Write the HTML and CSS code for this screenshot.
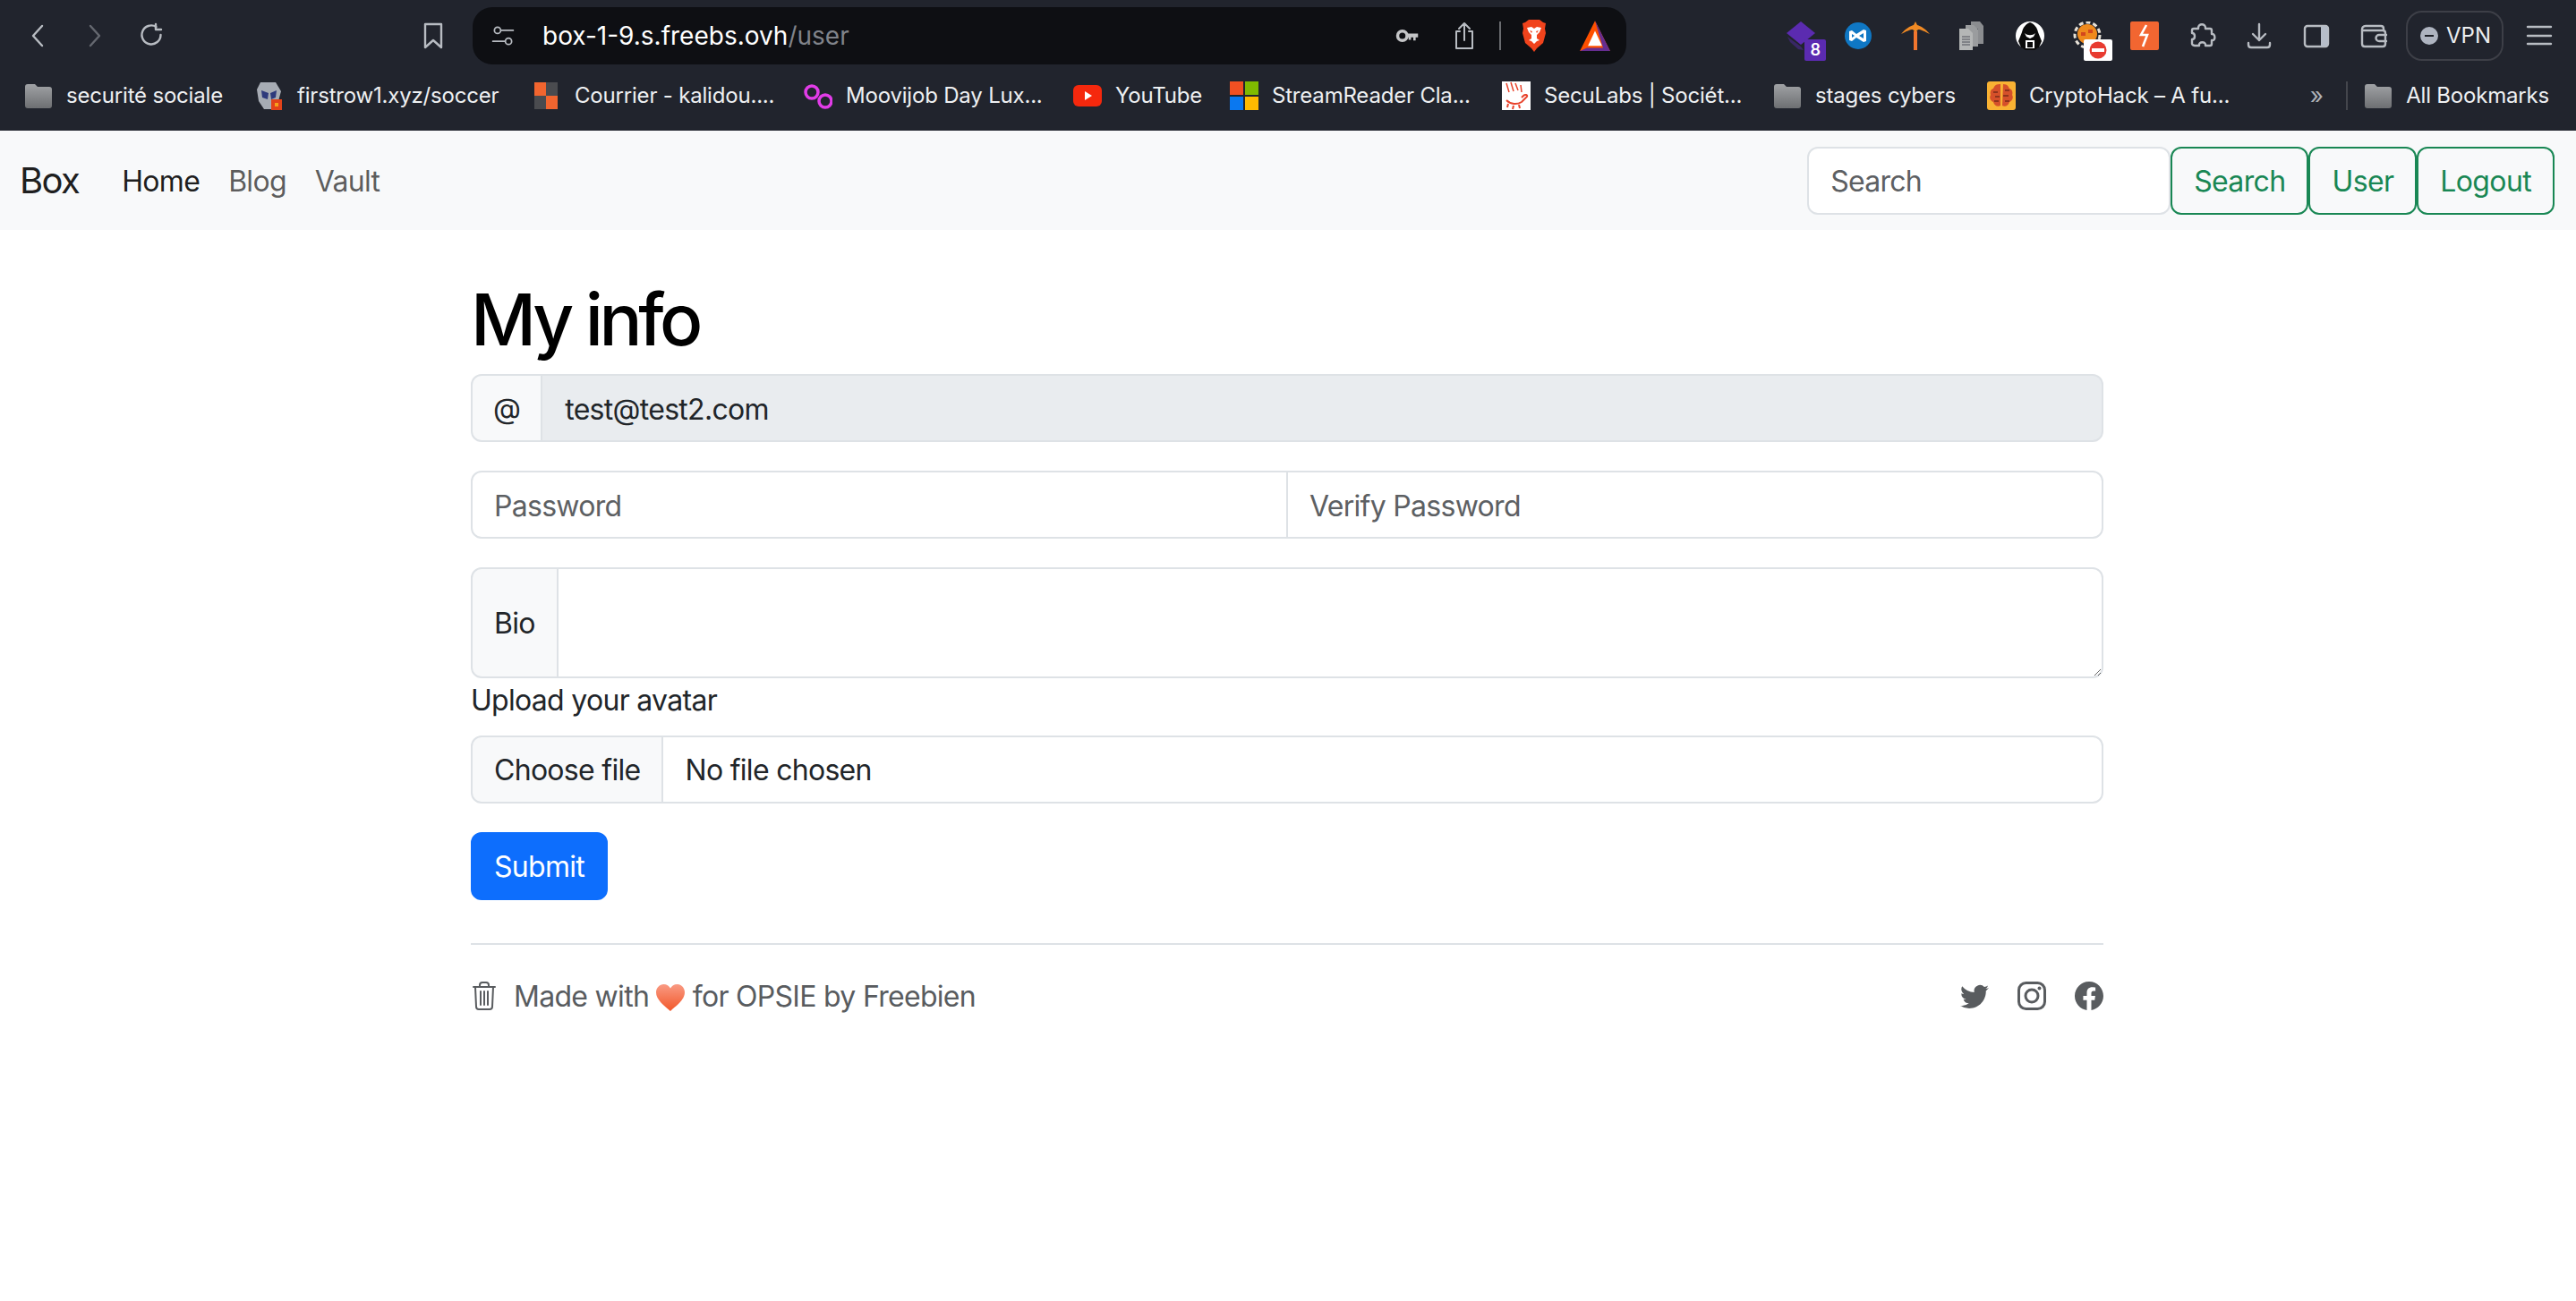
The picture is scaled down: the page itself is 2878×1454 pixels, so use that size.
FILE: index.html
```html
<!DOCTYPE html>
<html lang="en">
<head>
<meta charset="utf-8">
<title>My info</title>
<link rel="stylesheet" href="styles.css">
</head>
<body>
<header class="chrome">
  <div class="toolbar">
    <div class="tool-group">
      <svg class="ico" viewBox="0 0 32 32"><path class="st" d="M21 5 11 16l10 11"/></svg>
      <svg class="ico dim" viewBox="0 0 32 32"><path class="st" d="m11 5 10 11-10 11"/></svg>
      <svg class="ico" viewBox="0 0 32 32"><path class="st" d="M25.5 15a10.5 10.5 0 1 1-5-9M20 3v6h6"/></svg>
    </div>
    <svg class="ico bookmark-ico" viewBox="0 0 32 32"><path class="st" d="M7 3h18v26l-9-8-9 8z"/></svg>
    <div class="addressbar">
      <svg class="ico tune" viewBox="0 0 32 32"><circle class="st thin" cx="9" cy="9" r="4"/><path class="st thin" d="M14 9h15M3 23h15"/><circle class="st thin" cx="23" cy="23" r="4"/></svg>
      <span class="url">box-1-9.s.freebs.ovh<span class="url-path">/user</span></span>
      <div class="addr-actions">
        <svg class="ico key" viewBox="0 0 32 32"><circle class="key-ring" cx="10" cy="16" r="6"/><path class="key-fill" d="M15 13h15v5h-3v4h-3v-4h-3v3h-3v-3h-3z"/></svg>
        <svg class="ico share" viewBox="0 0 32 32"><path class="st thin" d="M16 21V2m-6 6 6-6 6 6M11 11H7v19h18V11h-4"/></svg>
        <span class="addr-sep"></span>
        <svg class="ico brave" viewBox="0 0 32 36"><path fill="#f1431c" d="M6 3 10 0h12l4 3 3 1-1 6 1 5-3 11-7 6-3 4-3-4-7-6-3-11 1-5-1-6z"/><path fill="#fff" d="M8 9l5-1 3 2 3-2 5 1-2 5-3 3v4l3 2-3 1-3 3-3-3-3-1 3-2v-4l-3-3z"/><path fill="#f1431c" d="M11 12l3 1-1 2zM21 12l-3 1 1 2z"/></svg>
        <svg class="ico bat" viewBox="0 0 32 32"><path fill="#ff5000" d="M16 1 1 31h30z"/><path fill="#662d91" d="M16 1l15 30H1l7-3h16z"/><path fill="#fff" d="M16 11l7 15H9z"/></svg>
      </div>
    </div>
    <div class="tool-right">
      <div class="ext">
        <svg class="ico" viewBox="0 0 32 32"><path fill="#5b2bb0" d="M16 0 32 13 16 26 0 13z"/><path fill="#4a2a8c" opacity=".6" d="M1 17l15 11 3 4-6-1-9-8z"/></svg>
        <span class="badge badge-purple">8</span>
      </div>
      <svg class="ico" viewBox="0 0 32 32"><circle cx="16" cy="16" r="15" fill="#0f77c4"/><path fill="#fff" d="M6 11l3-1 5 4 8-5 3 1v12l-3 1-8-5-5 4-3-1zm3 3v4l3-2zm13-1-5 3 5 3z"/></svg>
      <svg class="ico" viewBox="0 0 32 32"><path fill="#f08a24" d="M0 14C5 8 10 5 14 4l2-4 2 4c4 1 9 4 14 10-6-3-10-5-13-5l-3 3-3-3c-3 0-7 2-13 5z"/><rect fill="#f2762e" x="14" y="11" width="4" height="21"/></svg>
      <svg class="ico" viewBox="0 0 32 32"><path fill="#8b8d90" d="M14 0h10l4 5v20h-6V8h-8z"/><path fill="#9a9c9e" d="M8 4h9l5 5v19H8z"/><path fill="#b4b6b6" d="M1 8h10l5 5v19H1z"/><path stroke="#70737a" stroke-width="1.3" d="M4 17h9M4 20h9M4 23h9M4 26h9"/></svg>
      <svg class="ico" viewBox="0 0 32 32"><circle cx="16" cy="16" r="16" fill="#fff"/><path fill="#0b0b0b" d="M16 1C11 3 8 7 7 12L3 22l3 7 5 3h10l5-3 3-7-4-10C24 7 21 3 16 1z"/><path fill="#fff" d="M10 13c3 3 9 3 12 0l-2 4-4 2-4-2zM11 21h10v9H11z"/><path fill="#0b0b0b" d="M13 23h6v6h-6z"/></svg>
      <div class="ext">
        <svg class="ico" viewBox="0 0 32 32"><circle cx="16" cy="15" r="14" fill="none" stroke="#e8e2d8" stroke-width="3" stroke-dasharray="5 3"/><circle cx="16" cy="14" r="11" fill="#ef8a1d"/><path fill="#d4471d" d="M9 12h5v4H9zM17 9h5v4h-5z"/></svg>
        <span class="badge badge-stop"><svg class="stop" viewBox="0 0 20 20"><circle cx="10" cy="10" r="9.5" fill="#e83b30"/><rect x="3" y="8" width="14" height="4" fill="#fff"/></svg></span>
      </div>
      <svg class="ico" viewBox="0 0 32 32"><rect width="32" height="32" rx="2" fill="#f26631"/><path fill="none" stroke="#fff" stroke-width="2.600" d="M18 4 12 15h7l-5 13"/></svg>
      <svg class="ico" viewBox="0 0 32 32"><path class="st" d="M12 7c0-5 8-5 8 0v1h5c1 0 2 1 2 2v4c4-1 5 8 0 7v4c0 1-1 2-2 2h-5c1-5-8-5-7 0H8c-1 0-3-1-3-2v-5c4 0 4-7 0-7v-3c0-1 1-2 2-2h5z"/></svg>
      <svg class="ico" viewBox="0 0 32 32"><path class="st" d="M16 3v18m-7-7 7 7 7-7M4 24v2c0 2 1 3 3 3h18c2 0 3-1 3-3v-2"/></svg>
      <svg class="ico" viewBox="0 0 32 32"><rect class="st" x="3" y="5" width="26" height="23" rx="3"/><path fill="#b6bdc9" d="M21 5h5c2 0 3 1 3 3v17c0 2-1 3-3 3h-5z"/></svg>
      <svg class="ico" viewBox="0 0 32 32"><path class="st" d="M3 9c0-2 1-4 4-4h17c2 0 3 1 3 3v2M3 9v16c0 2 1 3 3 3h20c2 0 3-1 3-3V13c0-2-1-3-3-3H6c-2 0-3 0-3-1z"/><path class="st" d="M30 15h-8a3.500 3.500 0 0 0 0 7h8"/></svg>
      <div class="vpn">
        <svg class="vpn-dot" viewBox="0 0 20 20"><circle cx="10" cy="10" r="10" fill="#aeb4c0"/><rect x="5" y="9" width="10" height="2" fill="#1d2027"/></svg>
        <span>VPN</span>
      </div>
      <svg class="ico burger" viewBox="0 0 32 32"><path class="st" d="M3 6h26M3 16h26M3 25h26"/></svg>
    </div>
  </div>
  <nav class="bookmarks">
    <a class="bm"><svg class="ico" viewBox="0 0 32 32"><use href="#folder"/></svg><span>securité sociale</span></a>
    <a class="bm"><svg class="ico" viewBox="0 0 32 32"><path fill="#a7acb4" d="M6 1h17l6 10-3 11-5 9H10L4 22 2 9z"/><path fill="#2e3a7c" d="M7 10l8 3-1 7-6-2zM24 10l-7 3 1 7 5-2z"/><path fill="#e2431a" d="M18 20h12v12H18z"/><path fill="#f8a01a" d="M22 24h4v4h-4z"/></svg><span>firstrow1.xyz/soccer</span></a>
    <a class="bm"><svg class="ico" viewBox="0 0 32 32"><rect x="2" y="1" width="13" height="15" fill="#f2652f"/><rect x="15" y="1" width="13" height="15" fill="#4a4b4f"/><rect x="2" y="16" width="13" height="15" fill="#4a4b4f"/><rect x="15" y="16" width="13" height="15" fill="#f2652f"/></svg><span>Courrier - kalidou....</span></a>
    <a class="bm"><svg class="ico" viewBox="0 0 32 32"><circle cx="9" cy="12" r="7" fill="none" stroke="#e23ce8" stroke-width="3.500"/><circle cx="24" cy="22" r="7" fill="none" stroke="#e23ce8" stroke-width="3.500"/></svg><span>Moovijob Day Lux...</span></a>
    <a class="bm"><svg class="ico" viewBox="0 0 32 32"><rect y="4" width="32" height="24" rx="6" fill="#f5280d"/><path fill="#fff" d="M13 11l8 5-8 5z"/></svg><span>YouTube</span></a>
    <a class="bm"><svg class="ico" viewBox="0 0 32 32"><rect width="15" height="15" y="0" fill="#f25022"/><rect x="17" width="15" height="15" fill="#7fba00"/><rect y="17" width="15" height="15" fill="#0a78f0"/><rect x="17" y="17" width="15" height="15" fill="#ffb900"/></svg><span>StreamReader Cla...</span></a>
    <a class="bm"><svg class="ico" viewBox="0 0 32 32"><rect width="32" height="32" fill="#fff"/><path fill="none" stroke="#e8432c" stroke-width="1.500" d="M5 2l3 10M10 1l3 10M15 2l3 8M21 4l1 8"/><path fill="none" stroke="#e8432c" stroke-width="2" d="M5 21c5 5 12 5 17 2l6-6c1-2-2-3-4-1l-2 2M7 25l-1 4M13 27l-1 4M19 26l1 4"/></svg><span>SecuLabs | Sociét...</span></a>
    <a class="bm"><svg class="ico" viewBox="0 0 32 32"><use href="#folder"/></svg><span>stages cybers</span></a>
    <a class="bm"><svg class="ico" viewBox="0 0 32 32"><rect width="32" height="32" rx="3" fill="#f9b233"/><path fill="#d5502a" d="M14 3c-5 0-6 3-7 5-3 1-4 4-3 7-2 3 0 7 3 8 1 4 5 6 8 4V3zM18 3c5 0 6 3 7 5 3 1 4 4 3 7 2 3 0 7-3 8-1 4-5 6-8 4z"/><path fill="none" stroke="#7a2a18" stroke-width="1.300" d="M7 12h5M9 17h5M8 22h5M20 10h5M18 16h6M20 22h5"/></svg><span>CryptoHack – A fu...</span></a>
    <div class="bm-end">
      <span class="more">»</span>
      <span class="bm-sep"></span>
      <a class="bm"><svg class="ico" viewBox="0 0 32 32"><use href="#folder"/></svg><span>All Bookmarks</span></a>
    </div>
  </nav>
</header>

<nav class="navbar">
  <a class="brand">Box</a>
  <ul class="nav-links">
    <li class="nav-link active">Home</li>
    <li class="nav-link">Blog</li>
    <li class="nav-link">Vault</li>
  </ul>
  <form class="nav-search">
    <input class="control search-input" type="search" placeholder="Search">
    <button class="btn-outline" type="button">Search</button>
    <button class="btn-outline" type="button">User</button>
    <button class="btn-outline" type="button">Logout</button>
  </form>
</nav>

<main class="container">
  <h1 class="title">My info</h1>
  <form>
    <div class="group row-gap">
      <span class="addon addon-at">@</span>
      <input class="control joined disabled" type="text" value="test@test2.com" disabled>
    </div>
    <div class="group row-gap">
      <input class="control pw-left" type="password" placeholder="Password">
      <input class="control pw-right" type="password" placeholder="Verify Password">
    </div>
    <div class="group">
      <span class="addon">Bio</span>
      <textarea class="control joined bio"></textarea>
    </div>
    <label class="upload-label">Upload your avatar</label>
    <div class="group row-gap">
      <span class="addon file-btn">Choose file</span>
      <span class="control joined file-name">No file chosen</span>
    </div>
    <button class="btn-submit" type="button">Submit</button>
  </form>
  <footer class="footer">
    <div class="foot-left">
      <svg class="trash" viewBox="0 0 26 32"><path d="M1 6h24M8 6V4c0-2 1-3 3-3h4c2 0 3 1 3 3v2M3 6l1 22c0 2 1 3 3 3h12c2 0 3-1 3-3l1-22M9 11v15M13 11v15M17 11v15"/></svg>
      <span class="foot-text">Made with <svg class="heart" viewBox="0 0 32 30"><defs><linearGradient id="hg" x1="0" y1="0" x2="0" y2="1"><stop offset="0" stop-color="#f99a83"/><stop offset="1" stop-color="#f2582a"/></linearGradient></defs><path fill="url(#hg)" d="M16 30C8 23 0 17 0 9c0-5 4-9 8.500-9C12 0 14.500 2 16 4.500 17.500 2 20 0 23.500 0 28 0 32 4 32 9c0 8-8 14-16 21z"/></svg> for OPSIE by Freebien</span>
    </div>
    <div class="socials">
      <svg class="social" viewBox="0 0 16 16"><path d="M5.026 15c6.038 0 9.341-5.003 9.341-9.334 0-.14 0-.282-.006-.422A6.685 6.685 0 0 0 16 3.542a6.658 6.658 0 0 1-1.889.518 3.301 3.301 0 0 0 1.447-1.817 6.533 6.533 0 0 1-2.087.793A3.286 3.286 0 0 0 7.875 6.03a9.325 9.325 0 0 1-6.767-3.429 3.289 3.289 0 0 0 1.018 4.382A3.323 3.323 0 0 1 .64 6.575v.045a3.288 3.288 0 0 0 2.632 3.218 3.203 3.203 0 0 1-.865.115 3.23 3.23 0 0 1-.614-.057 3.283 3.283 0 0 0 3.067 2.277A6.588 6.588 0 0 1 .78 13.58a6.32 6.32 0 0 1-.78-.045A9.344 9.344 0 0 0 5.026 15z"/></svg>
      <svg class="social" viewBox="0 0 32 32"><rect class="ig" x="1.500" y="1.500" width="29" height="29" rx="8"/><circle class="ig" cx="16" cy="16" r="7"/><circle cx="24.500" cy="7.500" r="2"/></svg>
      <svg class="social" viewBox="0 0 16 16"><path d="M16 8.049c0-4.446-3.582-8.05-8-8.05C3.58 0-.002 3.603-.002 8.05c0 4.017 2.926 7.347 6.75 7.951v-5.625h-2.03V8.05H6.75V6.275c0-2.017 1.195-3.131 3.022-3.131.876 0 1.791.157 1.791.157v1.98h-1.009c-.993 0-1.303.621-1.303 1.258v1.51h2.218l-.354 2.326H9.25V16c3.824-.604 6.750-3.934 6.750-7.951z"/></svg>
    </div>
  </footer>
</main>

<svg class="defs" width="0" height="0"><defs><linearGradient id="fg" x1="0" y1="0" x2="0" y2="1"><stop offset="0" stop-color="#a0a2a5"/><stop offset="1" stop-color="#6d6f72"/></linearGradient><g id="folder"><path fill="url(#fg)" d="M1 6c0-2 1-3 3-3h8l3 3h13c2 0 3 1 3 3v18c0 2-1 3-3 3H4c-2 0-3-1-3-3z"/></g></defs></svg>
</body>
</html>
```
FILE: styles.css
```css
* { box-sizing: border-box; }
html, body { margin: 0; padding: 0; }
body {
  height: 1454px;
  overflow: hidden;
  background: #fff;
  color: #212529;
  font-family: Inter, "Liberation Sans", sans-serif;
  font-size: 32px;
  line-height: 48px;
  letter-spacing: -0.022em;
}
.defs { position: absolute; }

/* browser chrome */
.chrome { background: #21242d; height: 146px; color: #fff; }
.toolbar { height: 80px; display: flex; align-items: center; padding: 0 25px 0 26px; }
.ico { width: 32px; height: 32px; flex: none; display: block; }
.st { fill: none; stroke: #b8bcc2; stroke-width: 2.4; stroke-linecap: round; stroke-linejoin: round; }
.thin { stroke-width: 2; }
.dim { opacity: .45; }
.tool-group { display: flex; gap: 32px; }
.bookmark-ico { margin-left: 282px; }
.addressbar {
  width: 1289px; height: 64px; margin-left: 28px;
  background: #0e0f13; border-radius: 22px;
  display: flex; align-items: center; padding: 0 17px 0 20px;
}
.tune { width: 28px; height: 28px; }
.url { margin-left: 30px; font-size: 28px; letter-spacing: 0; color: #fff; }
.url-path { color: #80838a; }
.addr-actions { margin-left: auto; display: flex; align-items: center; }
.key-ring { fill: none; stroke: #c4c5c7; stroke-width: 4; }
.key-fill { fill: #c4c5c7; }
.key { width: 28px; height: 28px; }
.share { margin-left: 34px; }
.addr-sep { width: 2px; height: 32px; background: #6a6c70; margin: 0 21px 0 23px; }
.bat { margin-left: 34px; width: 36px; height: 36px; }
.brave { height: 36px; }
.tool-right { margin-left: auto; display: flex; align-items: center; gap: 32px; }
.ext { position: relative; width: 32px; height: 32px; }
.badge {
  position: absolute; top: 20px; height: 24px; border-radius: 2px;
  display: flex; align-items: center; justify-content: center;
}
.badge-purple { left: 20px; width: 24px; background: #5b2bb0; color: #fff; font-size: 18px; font-weight: 600; line-height: 24px; }
.badge-stop { left: 12px; width: 32px; background: #fff; }
.stop { width: 20px; height: 20px; }
.vpn {
  width: 109px; height: 56px; margin-left: -12px;
  border: 2px solid #3d3f47; border-radius: 18px;
  display: flex; align-items: center; padding-left: 14px; gap: 9px;
  font-size: 24px; line-height: 1; color: #eceef0; letter-spacing: 0;
}
.vpn-dot { width: 20px; height: 20px; flex: none; }
.burger { margin-left: -8px; }

.bookmarks {
  height: 66px; padding: 0 30px 13px 27px;
  display: grid; grid-template-columns: 258px 310px 303px 301px 175px 304px 303px 239px 320px 1fr;
  align-items: center;
}
.bm { display: flex; align-items: center; gap: 15px; font-size: 24px; line-height: 32px; color: #eef0f2; white-space: nowrap; letter-spacing: -0.008em; }
.bm-end { display: flex; align-items: center; justify-content: flex-end; }
.more { color: #aeb1b6; font-size: 26px; line-height: 32px; margin-right: 26px; }
.bm-sep { width: 2px; height: 32px; background: #44464d; margin-right: 18px; }

/* navbar */
.navbar {
  height: 111px; background: #f8f9fa; padding: 0 24px 0 22px;
  display: flex; align-items: center;
}
.brand { font-size: 40px; line-height: 60px; color: rgba(0,0,0,.9); margin-right: 32px; letter-spacing: -0.04em; }
.nav-links { display: flex; list-style: none; margin: 0; padding: 0; }
.nav-link { padding: 2px 16px 0; color: rgba(0,0,0,.65); }
.nav-link.active { color: rgba(0,0,0,.9); }
.nav-search { margin-left: auto; display: flex; align-items: stretch; }
.control {
  display: block; font: inherit; letter-spacing: inherit; color: #212529;
  background: #fff; border: 2px solid #dee2e6; border-radius: 12px;
  padding: 13px 24px 11px; height: 76px; outline: 0; min-width: 0;
}
.control::placeholder { color: #5d6063; opacity: 1; }
.search-input { width: 406px; }
.btn-outline {
  font: inherit; letter-spacing: -0.02em; color: #198754; background: transparent;
  border: 2px solid #198754; border-radius: 12px; padding: 2px 24px 0; height: 76px;
}

/* page */
.container { width: 1824px; margin: 0 0 0 526px; padding-top: 52px; }
.title { font-size: 80px; font-weight: 500; line-height: 96px; margin: 0 0 13px; color: #000; letter-spacing: -0.055em; }
.group { display: flex; align-items: stretch; }
.row-gap { margin-bottom: 32px; }
.addon {
  display: flex; align-items: center; padding: 2px 24px 0;
  background: #f8f9fa; border: 2px solid #dee2e6; border-radius: 12px 0 0 12px;
  white-space: nowrap;
}
.addon-at { padding: 2px 23px 0; }
.joined { flex: 1; margin-left: -2px; border-radius: 0 12px 12px 0; }
.disabled { background: #e9ecef; opacity: 1; -webkit-text-fill-color: #212529; padding-left: 25px; }
.pw-left { flex: 1; border-radius: 12px 0 0 12px; }
.pw-right { flex: 1; margin-left: -2px; border-radius: 0 12px 12px 0; }
.bio { height: 124px; }
.upload-label { display: block; margin-bottom: 16px; padding-top: 1px; height: 48px; }
.file-btn { height: 76px; }
.btn-submit {
  display: block; font: inherit; letter-spacing: inherit; color: #fff;
  background: #0d6efd; border: 2px solid #0d6efd; border-radius: 12px;
  padding: 2px 24px 0; height: 76px;
}
.footer {
  margin-top: 48px; padding-top: 32px; border-top: 2px solid #dee2e6;
  display: flex; align-items: center; justify-content: space-between;
  color: #595c5f;
}
.foot-left { display: flex; align-items: center; gap: 20px; }
.trash { width: 26px; height: 32px; fill: none; stroke: #595c5f; stroke-width: 2; stroke-linecap: round; stroke-linejoin: round; margin-left: 2px; }
.foot-text { padding-top: 2px; }
.heart { width: 32px; height: 30px; vertical-align: -5px; }
.socials { display: flex; gap: 32px; }
.social { width: 32px; height: 32px; fill: #595c5f; display: block; }
.ig { fill: none; stroke: #595c5f; stroke-width: 3; }
```
